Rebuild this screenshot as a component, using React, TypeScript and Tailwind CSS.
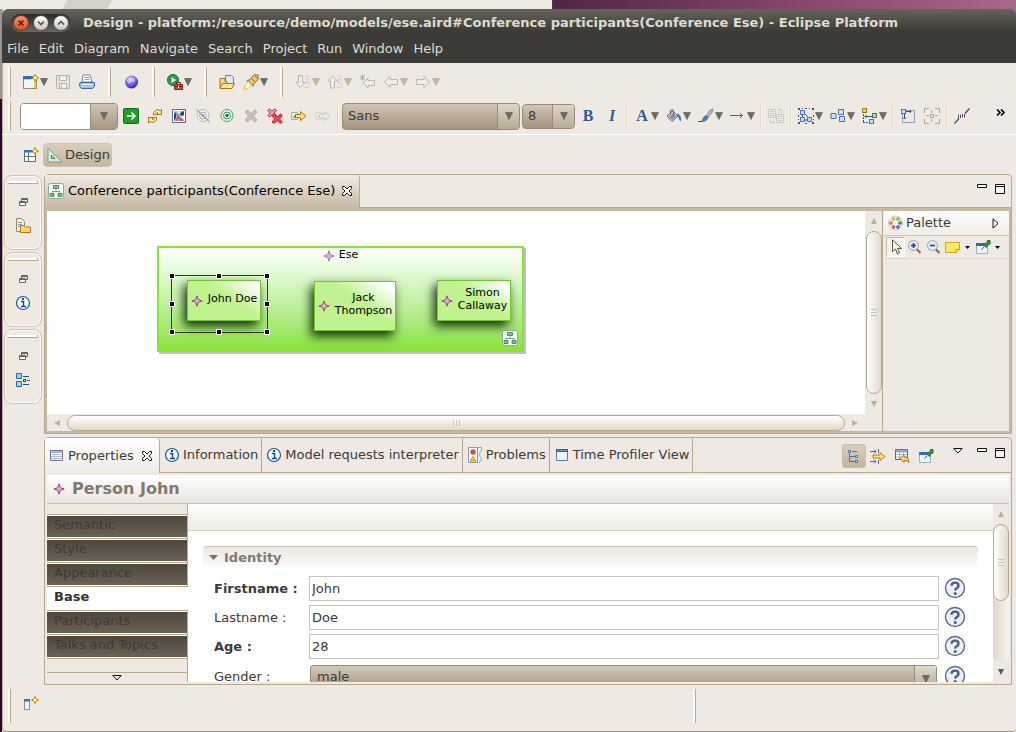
import React from "react";

type Kids = { children?: React.ReactNode };

/* ---------- icon helpers ---------- */

function Icon({ children, size = 16, faded = false }: Kids & { size?: number; faded?: boolean }) {
  return (
    <svg
      aria-hidden="true"
      width={size}
      height={size}
      viewBox="0 0 16 16"
      fill="none"
      className={faded ? "shrink-0 opacity-60" : "shrink-0"}
    >
      {children}
    </svg>
  );
}

function Spark({ x = 9, y = 0 }: { x?: number; y?: number }) {
  return (
    <path
      d={`M${x + 3.5} ${y}l1.2 2.3 2.3 1.2-2.3 1.2-1.2 2.3-1.2-2.3-2.3-1.2 2.3-1.2z`}
      fill="#fff3b0"
      stroke="#b8860b"
    />
  );
}

function Caret({ faded = false }: { faded?: boolean }) {
  return (
    <svg aria-hidden="true" width="8" height="8" viewBox="0 0 8 8" className="shrink-0">
      <path d="M0.5 0.5h7L4 7.5z" fill={faded ? "#c4b69c" : "#6e6b64"} stroke={faded ? "#b5a78b" : "#5a5852"} strokeWidth="0.6" />
    </svg>
  );
}

const NewWizardIcon = () => (
  <Icon>
    <rect x="0.5" y="2.5" width="13" height="12" fill="#eef7fc" stroke="#9a8a58" />
    <path d="M0 2h11v3H0z" fill="#2f6cb0" />
    <path d="M1 5h7v1H1z" fill="#a9cdec" />
    <path d="M11.5 14C12.500 11 12.500 9 12 6" stroke="#f0c850" strokeWidth="2" />
    <Spark x={8.7} y={0.3} />
  </Icon>
);
const SaveIcon = () => (
  <Icon>
    <path d="M1.5 1.5h13v13h-12l-1-1z" fill="#e6e3dd" stroke="#b6b3ad" />
    <path d="M4.5 1.5h7v5h-7zM4.5 9.5h7v5h-7z" fill="#f1efea" stroke="#b6b3ad" />
    <path d="M6.5 11v3" stroke="#b6b3ad" />
  </Icon>
);
const PrintIcon = () => (
  <Icon>
    <path d="M4 1h7l2 7H3z" fill="#fff" stroke="#6b87b5" />
    <path d="M5.5 3.5h5M5.5 5.5h5" stroke="#7d9bd0" />
    <path d="M1 8.5h14.5v4l-2 2H2.5l-2-2z" fill="#a9c3e6" stroke="#44699e" />
    <path d="M3 10.5h10" stroke="#e9f1fb" />
  </Icon>
);
const BallIcon = () => (
  <Icon>
    <defs>
      <radialGradient id="ball" cx="0.4" cy="0.3" r="0.75">
        <stop offset="0" stopColor="#e6e2ff" />
        <stop offset="0.45" stopColor="#8479f5" />
        <stop offset="1" stopColor="#2a10b8" />
      </radialGradient>
    </defs>
    <circle cx="8.5" cy="8" r="6.5" fill="url(#ball)" />
    <path d="M4 7q3-3 8-2M5 9q3-3 7-2" stroke="#e7e4ff" strokeWidth="0.8" />
  </Icon>
);
const RunIcon = () => (
  <Icon>
    <circle cx="6" cy="6" r="5.5" fill="#2c9a4c" stroke="#15703a" />
    <path d="M4.5 3v6l4.5-3z" fill="#fff" />
    <path d="M7.5 10.5h8v5h-8z" fill="#d8483c" stroke="#9c1f1c" />
    <path d="M9.5 10V8.500h4V10M8 12.500h7" stroke="#7d1414" />
    <path d="M11 12h1v2h-1z" fill="#fff" />
  </Icon>
);
const OpenIcon = () => (
  <Icon>
    <path d="M6.500 1.500h6l2 2v7h-8z" fill="#dfe9f6" stroke="#6b82a8" />
    <path d="M1 4.500h5v3h2V14H1z" fill="#f6d68a" stroke="#a8731b" />
    <path d="M3.500 9.500h12l-2.500 5H1z" fill="#fbe3a4" stroke="#a8731b" />
  </Icon>
);
const RocketIcon = () => (
  <Icon>
    <path d="M11 .8l4.200 .2-.3 4.500-5.300 5.500-4-4z" fill="#f6c47a" stroke="#9d6a22" />
    <path d="M8.500 4.500l3.500 3.500M12 2l2.500 2.500" stroke="#7a5b9b" />
    <path d="M5 7.500l3.500 3.500Q6 15 1 15.500 .5 12 5 7.500z" fill="#fffbd0" stroke="#d9b437" strokeWidth="0.800" />
    <path d="M6 5L3 6.500 5 8zM9 11l1 2.500 1.500-4z" fill="#6d86ad" />
  </Icon>
);
const AnnoIcon = ({ up = false }: { up?: boolean }) => (
  <Icon>
    <path
      d={up ? "M5.500 2l5 5H7.500v7h-4V7H.8z" : "M3.500 1.500h4v7h2.700l-4.700 5-4.700-5h2.700z"}
      fill="#f0ede6"
      stroke="#b9b6ae"
    />
    <path d="M10 1.500h3M11 3.500h2M11 5.500h2M11 7.500h2M11 9.500h2M10 13.500h3" stroke="#cfccc4" />
    <path d="M14.500 1v14" stroke="#dedbd4" />
  </Icon>
);
const ArrowIcon = ({ right = false, star = false }: { right?: boolean; star?: boolean }) => (
  <Icon>
    <path
      d={right ? "M14.500 8L9 2.500v3H1.500v5H9v3z" : star ? "M4 9l5-5v2.500h6.500v5H9V14z" : "M1.500 8L7 2.500v3h7.500v5H7v3z"}
      fill="#f0ede6"
      stroke="#bbb8b0"
    />
    {star && <path d="M3.500 .5v6M.8 1.500l5.400 4M6.200 1.500l-5.400 4" stroke="#aaa79f" />}
  </Icon>
);

const GoIcon = () => (
  <Icon>
    <rect x="0.5" y="0.500" width="15" height="15" rx="1" fill="#279a2c" stroke="#11691a" />
    <path d="M4 8h8M8.500 4.500L12 8l-3.500 3.500" stroke="#fff" strokeWidth="1.500" />
  </Icon>
);
const SyncIcon = () => (
  <Icon>
    <path d="M8.500 2.500Q11 .5 13 2.500L14.500 1.500v5h-5L11 5Q9.500 4 8.800 5.800 8 7.500 6.500 7 6 4 8.500 2.500z" fill="#ffe59a" stroke="#a8741a" />
    <path d="M8 13.500Q5.500 15.500 3.500 13.500L1.500 15v-5.500h5L5 11Q6.500 12 7.200 10.200 8 8.500 9.500 9 10 12 8 13.500z" fill="#ffe59a" stroke="#a8741a" />
  </Icon>
);
const ImageIcon = () => (
  <Icon>
    <rect x="1.500" y="1.500" width="13" height="13" fill="#fff" stroke="#5c6f87" />
    <path d="M3 3h10v10H3z" fill="#9cc0e6" />
    <path d="M3 6l2-2v6l-2 3zM9 5l4-2v4l-3 1z" fill="#23477c" />
    <path d="M5.500 5l2.500 2v1.500l3 2 1.500 2.500H9l-1.500-2L6 13H4.500l1.500-4z" fill="#d35f4d" />
    <path d="M6 3h3v3H8zM9.500 8H13v3l-2-1z" fill="#f4f2ee" />
  </Icon>
);
const TargetIcon = ({ off = false }: { off?: boolean }) => (
  <Icon>
    <circle cx="8" cy="7.500" r="6" fill="#f5f7f2" stroke={off ? "#b4b7ba" : "#43a061"} />
    <circle cx="8" cy="7.500" r="3.500" stroke={off ? "#9da2a6" : "#348a50"} />
    <circle cx="8" cy="7.500" r="1.800" fill={off ? "#b4b7ba" : "#1e7a40"} />
    {off && <path d="M1.500 1.500l13 12.500" stroke="#6f7c8c" />}
  </Icon>
);
const CrossIcon = () => (
  <Icon>
    <path d="M2 4l2-2 4 3.500L12 2l2 2-3.500 4L14 12l-2 2-4-3.500L4 14l-2-2 3.500-4z" fill="#c7c1ba" stroke="#b5aea6" />
  </Icon>
);
const DoubleCrossIcon = () => (
  <Icon>
    <path d="M.8 2.500l1.500-1.700L5 3.200 8 .8l1.500 1.700L7 5l2.500 2.700L8 9.200 5 7 2.500 9 1 7.500 3.200 5z" fill="#f4a0a6" stroke="#c4283a" />
    <path d="M5 7.500L6.700 6l3.500 2.800L13.700 6l1.600 1.500L12.500 11l2.800 2.700-1.600 1.700-3.500-2.700-3.500 2.700L5 13.700 7.800 11z" fill="#f0485a" stroke="#c01c34" />
  </Icon>
);
const TransferIcon = ({ off = false }: { off?: boolean }) => (
  <Icon>
    <path d="M.5 4.500h6v7h-6z" fill={off ? "#efece6" : "#e4f1e0"} stroke={off ? "#d9d6cf" : "#9cb89f"} />
    <path d="M2 10l1.500-3L5 10z" fill={off ? "#d3d0c8" : "#3f9a57"} />
    <path d="M4.500 6.500h5V3.500l5.500 4.700-5.500 4.500V9.800h-5z" fill={off ? "#efece6" : "#ffe18b"} stroke={off ? "#c9c6be" : "#a8741a"} />
  </Icon>
);
const FontColorIcon = () => <span className="w-4 text-center font-['Liberation_Serif',serif] text-base font-bold text-[#2f5a96]">A</span>;
const BucketIcon = () => (
  <Icon>
    <path d="M6.500 3L1 8l5 5.500L12 8z" fill="#c9ced9" stroke="#6b7080" />
    <path d="M7 5.500l3.500 3L6.500 12 3 9z" fill="#8d93a3" />
    <path d="M4.500 6.500V2.500q1.500-2 3 0V8" stroke="#5b5f6c" />
    <path d="M10.500 5.500q4.500 .5 4.500 5.500v2.500q-2-1-2.500-4z" fill="#3c74b5" />
  </Icon>
);
const BrushIcon = () => (
  <Icon>
    <path d="M15 1L12 2 8.500 7.500l2 1.800 3.500-4.800z" fill="#b8bcc8" stroke="#6a6e7a" strokeWidth="0.700" />
    <path d="M10 9.500Q9 13.500 3 13.500 5 13 5.500 9.500 7 7 8.500 8z" fill="#4d7fbd" stroke="#2c5a96" strokeWidth="0.700" />
    <path d="M0 13.500h4" stroke="#2c5a96" />
  </Icon>
);
const LineStyleIcon = () => (
  <Icon>
    <path d="M0 7.500h12.500M10 5l2.500 2.500L10 10" stroke="#3b62a0" />
  </Icon>
);
const CopyAppearanceIcon = () => (
  <Icon faded>
    <path d="M.5 1.500h7v8h-7zM8.500 6.500h7v8h-7z" fill="#efece6" stroke="#b9b6ae" />
    <path d="M2 3.500h4M2 5.500h4M2 7.500h4M10 8.500h4M10 10.500h4M10 12.500h4M9.500 1.500h4V5M12 3.500L13.500 5 15 3.500M2.500 11v3.500h4M5 13l1.500 1.500L5 16" stroke="#b9b6ae" />
  </Icon>
);
const SelectAllIcon = () => (
  <Icon>
    <path d="M0 0h2v2H0zM14 0h2v2h-2zM0 14h2v2H0zM14 14h2v2h-2zM7 0h2v1H7zM0 7h1v2H0zM15 7h1v2h-1zM7 15h2v1H7zM4 0h1v1H4zM11 0h1v1h-1zM0 11h1v1H0zM15 11h1v1h-1z" fill="#2f5690" />
    <path d="M6 5l6 6M4.500 5v7h7" stroke="#2f5690" />
    <path d="M2.500 2.500h4v4h-4zM2.500 9.500h4v4h-4zM9.500 9.500h4v4h-4z" fill="#c6dcf3" stroke="#4773b0" />
  </Icon>
);
const AlignIcon = () => (
  <Icon>
    <path d="M1 5.500h5v5H1zM8.500 1.500h5v5h-5zM9.500 8.500h5v5h-5z" fill="#cfe1f5" stroke="#4773b0" />
  </Icon>
);
const ArrangeIcon = () => (
  <Icon>
    <path d="M1.500 6v8M1 14.500h5" stroke="#2f5690" strokeDasharray="2 1" />
    <path d="M3 8.500h7M4.500 7l-1.500 1.500L4.500 10" stroke="#2f5690" />
    <rect x="0.500" y="0.500" width="4" height="4" fill="#f6d264" stroke="#98781c" />
    <rect x="10.500" y="5.500" width="4" height="4" fill="#a6dc8a" stroke="#47853a" />
    <rect x="7.500" y="11.500" width="4" height="4" fill="#c6dcf3" stroke="#4773b0" />
  </Icon>
);
const AutoSizeIcon = () => (
  <Icon>
    <path d="M2.500 2.500h12v12h-12z" stroke="#2f5690" strokeDasharray="1 1" />
    <path d="M5 3.500h6M9.500 2L11 3.500 9.500 5M4.500 5v6M3 9.500L4.500 11 6 9.500" stroke="#2f5690" />
    <rect x="1.500" y="1.500" width="4" height="4" fill="#d5e5f6" stroke="#4773b0" />
  </Icon>
);
const SnapIcon = () => (
  <Icon>
    <path d="M.5 5V.5H5M11 .5h4.500V5M.5 11v4.500H5M11 15.500h4.500V11M6.500 6.500h3v3h-3zM7.500 2v3M7.500 11v3M2 7.500h3M11 7.500h3" stroke="#a7a49d" />
  </Icon>
);
const RouteIcon = () => (
  <Icon>
    <path d="M15.500 .5L11 5.500M5 10.500L.5 15.500" stroke="#2f5690" strokeWidth="1.300" />
    <path d="M4.500 6.500v3.500M6.500 6.500v3.500M8.500 6v3.500M10.500 6v3.500" stroke="#5f4b52" />
  </Icon>
);
const PerspectiveIcon = () => (
  <Icon>
    <path d="M1.500 3.500h11v11h-11z" fill="#fff" stroke="#5a6d84" />
    <path d="M1 3h11v2.500H1z" fill="#3470b4" />
    <path d="M5.500 5v9M2 9.500h10" stroke="#5a6d84" />
    <Spark x={8.500} y={0.500} />
  </Icon>
);
const DesignIcon = () => (
  <Icon>
    <path d="M1 1v14h14z" fill="#d8ecdb" stroke="#7d9b83" />
    <path d="M4.500 8v3.500H8z" fill="#eee8dc" stroke="#4e7156" />
  </Icon>
);
const RestoreIcon = () => (
  <svg aria-hidden="true" width="9" height="9" viewBox="0 0 9 9" fill="none">
    <path d="M2.500 3V.5h6v4H7M2 1.500h7" stroke="#6a635a" />
    <path d="M.5 3.500h6v4h-6zM0 4.500h7" fill="#fff" stroke="#6a635a" />
  </svg>
);
const ProjectIcon = () => (
  <Icon>
    <path d="M1.500 .5h5l3 3v10h-8z" fill="#eef3fa" stroke="#a48a4a" />
    <path d="M3 4.500h4M3 6.500h4M3 8.500h3" stroke="#7a95c4" />
    <path d="M5.500 14.500v-7h4l1 1.500h5v5.500z" fill="#ffd772" stroke="#b37a18" />
  </Icon>
);
const InfoIcon = () => (
  <Icon>
    <circle cx="8" cy="8" r="6.500" fill="#f3f9ff" stroke="#175a9c" strokeWidth="1.200" />
    <path d="M6 6.500h2.500v5M6 11.500h5" stroke="#0f4a8c" strokeWidth="1.400" />
    <path d="M7 3h2v2H7z" fill="#0f4a8c" />
  </Icon>
);
const OutlineIcon = () => (
  <Icon>
    <path d="M1.500 1.500h5v5h-5zM1.500 9.500h5v5h-5z" fill="#9fd0f0" stroke="#1f6aa8" />
    <path d="M8 4.500h6M8 12.500h6M12 8.500h3" stroke="#1c4f80" />
    <rect x="8.500" y="7.500" width="2" height="2" stroke="#1c4f80" />
  </Icon>
);
const DiagramIcon = () => (
  <Icon>
    <rect x="0.500" y="0.500" width="15" height="15" rx="2" fill="#fff" stroke="#7fb391" />
    <path d="M5.500 2.500h5v3h-5zM2 10.500h4v3H2zM10 10.500h4v3h-4z" fill="#7fb98e" stroke="#4d8d60" />
    <path d="M8 5.500v3M4 10.500v-2h8v2" stroke="#6ba57c" />
  </Icon>
);
const CloseIcon = () => (
  <svg aria-hidden="true" width="12" height="12" viewBox="0 0 12 12">
    <path
      d="M1.500 1.500h2L6 4l2.500-2.500h2v2L8 6l2.500 2.500v2h-2L6 8l-2.500 2.500h-2v-2L4 6 1.500 3.500z"
      fill="#fff"
      stroke="#111"
    />
  </svg>
);
const StarIcon = ({ tone = "#a8407f" }: { tone?: string }) => (
  <svg aria-hidden="true" width="12" height="12" viewBox="0 0 12 12" className="shrink-0">
    <path d="M6 .8l1.300 3.900L11.200 6 7.300 7.300 6 11.200 4.700 7.300.8 6l3.900-1.300z" fill="#cdc3cf" stroke={tone} />
  </svg>
);
const TableIcon = () => (
  <Icon>
    <path d="M1.500 2.500h12v10h-12z" fill="#fff" stroke="#6b7a92" />
    <path d="M2 3h11v2H2z" fill="#a9b7cc" />
    <path d="M2 6.500h11M2 8.500h11M2 10.500h11M5.500 5v7" stroke="#b4bfd0" />
  </Icon>
);
const ProblemsIcon = () => (
  <Icon>
    <path d="M1.500 .5h9v15h-9z" fill="#fff" stroke="#8d98ab" />
    <path d="M11 .5h3.500v3q-2 2-2 4t2 4q0 3-3 4" fill="#e9f2fb" stroke="#88a8d0" />
    <circle cx="6" cy="5" r="2.800" fill="#dc4c50" />
    <path d="M6 9.500l3 4.500H3z" fill="#ffcf4a" stroke="#c98a12" />
  </Icon>
);
const ViewIcon = () => (
  <Icon>
    <path d="M2.500 2.500h11v11h-11z" fill="#eaf6fd" stroke="#5f7ba0" />
    <path d="M2 2h12v3H2z" fill="#2a64b0" />
    <path d="M3 3.500h10" stroke="#7fb0e2" strokeWidth="0.600" />
  </Icon>
);
const TreeIcon = () => (
  <Icon>
    <path d="M3.500 4v9.500h6M3.500 8.500h6M6 3.500h5" stroke="#4a74b4" />
    <path d="M2.500 2.500h2v2h-2zM9.500 7.500h2v2h-2zM9.500 12.500h2v2h-2z" fill="#d9e6f7" stroke="#4a74b4" />
  </Icon>
);
const FilterIcon = () => (
  <Icon>
    <path d="M0 3.500h6M4 1.500l2 2-2 2M0 13.500h6M4 11.500l2 2-2 2M8.500 1v4M8.500 12v4" stroke="#5a6b80" />
    <path d="M3 7h7V4.500L15 8.500l-5 4V10H3z" fill="#ffe08a" stroke="#b07f1e" />
  </Icon>
);
const TableRestoreIcon = () => (
  <Icon>
    <path d="M1.500 1.500h12v10h-12z" fill="#fff" stroke="#5c6780" />
    <path d="M2 2h11v2H2zM2 6.500h11M2 9h11M5.500 4v7M9.500 4v7" fill="#9db0cf" stroke="#8898b5" strokeWidth="0.700" />
    <path d="M6 10.500l4-3.500v2q5 0 5 5.500-2-2.500-5-2v2z" fill="#ffd873" stroke="#a8741a" />
  </Icon>
);
const PinIcon = () => (
  <Icon>
    <path d="M1.500 4.500h11v10h-11z" fill="#eaf5fc" stroke="#9db0c4" />
    <path d="M1 4h8v3H1z" fill="#2c6fb8" />
    <path d="M6.500 10.500L9.500 7.500" stroke="#444" />
    <path d="M8.500 5l3 3.500 1-2.500 2.500-1V1.500h-2.500L12 4z" fill="#3a9a3e" stroke="#1e6a26" />
  </Icon>
);
const PaletteIcon = () => (
  <Icon>
    <circle cx="7.500" cy="8" r="7" fill="#f2f7fd" stroke="#b9cbe2" />
    <circle cx="5.500" cy="4" r="1.500" fill="#f3c52a" stroke="#c89a18" strokeWidth="0.600" />
    <circle cx="10" cy="4" r="1.500" fill="#b5c23a" stroke="#7d9a1c" strokeWidth="0.600" />
    <circle cx="3" cy="8" r="1.500" fill="#f09a2a" stroke="#c46e10" strokeWidth="0.600" />
    <circle cx="12" cy="8" r="1.500" fill="#41a04a" stroke="#22702c" strokeWidth="0.600" />
    <circle cx="5.500" cy="12" r="1.500" fill="#f06868" stroke="#c02020" strokeWidth="0.600" />
    <circle cx="10" cy="12" r="1.500" fill="#5a86e0" stroke="#2848b0" strokeWidth="0.600" />
  </Icon>
);
const CursorIcon = () => (
  <Icon>
    <path d="M4.500 .8v12l3-2.800 2 5 2-1-2-4.500h4z" fill="#fdf9e6" stroke="#5d5647" />
  </Icon>
);
const MagnifyIcon = ({ minus = false }: { minus?: boolean }) => (
  <Icon>
    <path d="M9.500 10l4 4" stroke="#8a6b4b" strokeWidth="2.200" />
    <circle cx="6.500" cy="6.500" r="5" fill="#e3ebf7" stroke="#9aa4b5" />
    <path d={minus ? "M4 6.500h5" : "M4 6.500h5M6.500 4v5"} stroke="#1f3fa0" strokeWidth="1.600" />
  </Icon>
);
const NoteIcon = () => (
  <Icon>
    <path d="M.5 3.500h14v7l-3.500 3H.5z" fill="#ffe95a" stroke="#c4a53a" />
    <path d="M11 13.500v-3h3.500" fill="#fff3a8" stroke="#b6922a" />
  </Icon>
);
const FastViewIcon = () => (
  <Icon>
    <path d="M1.500 3.500h5v10h-5z" fill="#eef7fc" stroke="#7f8fa0" />
    <path d="M1 3h6v2.500H1z" fill="#3470b4" />
    <Spark x={8.500} y={0.500} />
  </Icon>
);
const HelpIcon = () => (
  <svg aria-hidden="true" width="22" height="22" viewBox="0 0 22 22">
    <circle cx="11" cy="11" r="9.500" fill="#eceef2" stroke="#5b6b88" strokeWidth="1.400" />
    <path d="M7.500 8.800Q7.700 5.600 11 5.600q3.500 0 3.500 2.900 0 1.700-1.700 2.600Q11.200 12 11.200 13.400" fill="none" stroke="#4c5f86" strokeWidth="2.400" />
    <circle cx="11.200" cy="16.500" r="1.500" fill="#4c5f86" />
  </svg>
);
const MinIcon = () => (
  <svg aria-hidden="true" width="10" height="4" viewBox="0 0 10 4">
    <path d="M.5 .5h9v3h-9z" fill="#fff" stroke="#111" />
  </svg>
);
const MaxIcon = () => (
  <svg aria-hidden="true" width="10" height="10" viewBox="0 0 10 10">
    <path d="M.5 .5h9v9h-9zM0 2.500h10" fill="#fff" stroke="#111" />
  </svg>
);
const MenuTriangle = () => (
  <svg aria-hidden="true" width="10" height="6" viewBox="0 0 10 6">
    <path d="M.8 .5h8.400L5 5z" fill="#fff" stroke="#111" />
  </svg>
);
const MiniCaret = () => (
  <svg aria-hidden="true" width="5" height="3" viewBox="0 0 5 3">
    <path d="M0 0h5L2.500 3z" fill="#000" />
  </svg>
);

/* ---------- tool bar pieces ---------- */

function Handle() {
  return <div className="w-[3px] shrink-0 self-stretch border-r border-[#b8a88c] bg-white/70" />;
}
function Group({ children }: Kids) {
  return (
    <div className="flex shrink-0 self-stretch">
      <Handle />
      <div className="ml-2 mr-[9px] flex items-center">{children}</div>
    </div>
  );
}
function Tool({ label, children, drop, faded }: Kids & { label: string; drop?: boolean; faded?: boolean }) {
  return (
    <button aria-label={label} className={drop ? "flex h-6 w-8 shrink-0 items-center gap-px pl-1" : "flex h-6 w-6 shrink-0 items-center justify-center"}>
      {children}
      {drop && <Caret faded={faded} />}
    </button>
  );
}
function Sep() {
  return <div className="mx-0.5 h-6 w-0.5 shrink-0 border-l border-[#e3d9c6] bg-[#f8f5ee]" />;
}
function Combo({ label, value, box, arrow }: { label: string; value: string; box: string; arrow: string }) {
  return (
    <div className={box}>
      <select aria-label={label} defaultValue={value} className="h-full w-full appearance-none bg-transparent pl-[5px] text-[#3c3b37] outline-none">
        <option>{value}</option>
      </select>
      <span className={arrow}>
        <Caret />
      </span>
    </div>
  );
}

function ScrollArrow({ dir, dark = false }: { dir: "up" | "down" | "left" | "right"; dark?: boolean }) {
  const d = {
    up: "M0 6h6L3 0z",
    down: "M0 0h6L3 6z",
    left: "M6 0v6L0 3z",
    right: "M0 0v6l6-3z",
  }[dir];
  return (
    <svg aria-hidden="true" width="6" height="6" viewBox="0 0 6 6" className="shrink-0">
      <path d={d} fill={dark ? "#5d5a53" : "#bcb09b"} />
    </svg>
  );
}

/* ---------- diagram ---------- */

function Handles() {
  const dot = "absolute size-1 bg-black outline outline-white";
  return (
    <>
      <span className={`${dot} -left-0.5 -top-0.5`} />
      <span className={`${dot} left-[45px] -top-0.5`} />
      <span className={`${dot} -right-0.5 -top-0.5`} />
      <span className={`${dot} -left-0.5 top-[26px]`} />
      <span className={`${dot} -right-0.5 top-[26px]`} />
      <span className={`${dot} -bottom-0.5 -left-0.5`} />
      <span className={`${dot} -bottom-0.5 left-[45px]`} />
      <span className={`${dot} -bottom-0.5 -right-0.5`} />
    </>
  );
}

const personBox =
  "absolute flex items-center gap-0.5 border border-[#73c82c] bg-[linear-gradient(215deg,#ffffff_8%,#c1f290_42%)] pl-[3px] text-[11px] leading-[13px] text-black shadow-[-3px_5px_10px_0_rgba(10,30,0,0.95)]";

function Diagram() {
  return (
    <div className="relative min-w-0 overflow-hidden bg-white">
      <div className="absolute left-[110px] top-[35px] h-[106px] w-[367px] border-2 border-[#8ae234] bg-gradient-to-b from-white to-[#8ae234] shadow-[2px_2px_0_#c3c0ca]">
        <div className="flex items-start justify-center gap-1 text-[11px] leading-[13px] text-black">
          <span className="pt-0.5"><StarIcon tone="#b46cc0" /></span>
          <span>Ese</span>
        </div>
      </div>
      <div className={`${personBox} left-[140px] top-[69px] h-[41px] w-[74px]`}>
        <StarIcon />
        <span className="grow pb-1 text-center">John Doe</span>
      </div>
      <div className={`${personBox} left-[267px] top-[70px] h-[50px] w-[82px]`}>
        <StarIcon />
        <span className="grow pb-1 text-center">Jack<br />Thompson</span>
      </div>
      <div className={`${personBox} left-[390px] top-[69px] h-[41px] w-[74px]`}>
        <StarIcon />
        <span className="grow pb-1 text-center">Simon<br />Callaway</span>
      </div>
      <div className="absolute left-[124px] top-[64px] h-[58px] w-[97px] border border-[#2c3a20]">
        <Handles />
      </div>
      <div className="absolute left-[455px] top-[119px]">
        <DiagramIcon />
      </div>
    </div>
  );
}

/* ---------- panels ---------- */

function TrimBox({ children }: Kids) {
  return (
    <div className="flex h-[75px] w-[38px] flex-col items-center rounded-lg border border-[#cfc4b0] shadow-[inset_0_0_0_1px_#fbfaf7]">
      <div className="mt-[5px] h-[3px] w-[30px] border-b border-r border-[#b8a88c] bg-white" />
      <div className="mt-[14px]">
        <RestoreIcon />
      </div>
      <div className="mt-[11px]">{children}</div>
    </div>
  );
}

function Editor() {
  return (
    <section className="flex min-h-0 flex-1 flex-col rounded-t-[4px] border border-[#b8a88c]">
      <div className="flex h-[33px] shrink-0">
        <div className="flex w-[315px] items-center rounded-tr-[4px] border-r border-[#b8a88c] bg-gradient-to-b from-[#f0ece5] to-[#c6b8a3] pb-px pl-[3px] text-black">
          <DiagramIcon />
          <span className="ml-1 whitespace-nowrap">Conference participants(Conference Ese)</span>
          <button aria-label="Close editor" className="ml-1.5">
            <CloseIcon />
          </button>
        </div>
        <div className="flex flex-1 items-start justify-end gap-2 border-b border-[#b8a88c] pr-[6px] pt-[9px]">
          <button aria-label="Minimize editor" className="flex"><MinIcon /></button>
          <button aria-label="Maximize editor" className="flex"><MaxIcon /></button>
        </div>
      </div>
      <div className="flex min-h-0 flex-1 border-2 border-t-[3px] border-[#c6b8a3]">
        <div className="grid min-w-0 flex-1 grid-cols-[minmax(0,1fr)_17px] grid-rows-[minmax(0,1fr)_17px]">
          <Diagram />
          <div className="flex flex-col items-center">
            <div className="flex h-5 items-center"><ScrollArrow dir="up" /></div>
            <div className="flex w-4 flex-1 items-center justify-center rounded-full border border-[#b8a88c] bg-gradient-to-r from-white to-[#e2dacb]">
              <span className="h-[7px] w-1.5 border-y border-[#cfc4b0] bg-[linear-gradient(#cfc4b0,#cfc4b0)] bg-[length:100%_1px] bg-center bg-no-repeat" />
            </div>
            <div className="flex h-5 items-center"><ScrollArrow dir="down" /></div>
          </div>
          <div className="flex items-center">
            <div className="flex w-5 justify-center"><ScrollArrow dir="left" /></div>
            <div className="flex h-4 flex-1 items-center justify-center rounded-full border border-[#b8a88c] bg-gradient-to-b from-white to-[#e2dacb]">
              <span className="h-1.5 w-[7px] border-x border-[#cfc4b0] bg-[linear-gradient(#cfc4b0,#cfc4b0)] bg-[length:1px_100%] bg-center bg-no-repeat" />
            </div>
            <div className="flex w-5 justify-center"><ScrollArrow dir="right" /></div>
          </div>
          <div />
        </div>
        <aside className="w-[127px] shrink-0 border-l border-[#b8a88c] pl-px">
          <div className="flex h-[25px] items-center border-b border-[#cfc4b0] bg-gradient-to-b from-white to-[#f0ece6] pl-1 pr-[10px]">
            <PaletteIcon />
            <span className="ml-0.5">Palette</span>
            <svg aria-hidden="true" width="7" height="11" viewBox="0 0 7 11" className="ml-auto">
              <path d="M1 .8v9.400L6 5.500z" fill="#fff" stroke="#111" />
            </svg>
          </div>
          <div className="flex h-[23px] items-center border-b border-[#dcd4c6] pl-0.5">
            <button aria-label="Select" className="flex h-5 w-[19px] items-center justify-center border border-[#c9bba3] border-b-white border-r-white bg-[#f7f5f1]"><CursorIcon /></button>
            <button aria-label="Zoom in" className="ml-0.5"><MagnifyIcon /></button>
            <button aria-label="Zoom out" className="ml-[3px]"><MagnifyIcon minus /></button>
            <button aria-label="Note" className="ml-[3px] flex items-center gap-1"><NoteIcon /><MiniCaret /></button>
            <button aria-label="Pin" className="ml-[5px] flex items-center gap-1"><PinIcon /><MiniCaret /></button>
          </div>
        </aside>
      </div>
    </section>
  );
}

function ViewTab({ icon, children }: Kids & { icon: React.ReactNode }) {
  return (
    <button className="flex shrink-0 items-center gap-[3px] whitespace-nowrap border-b border-r border-[#b8a88c] pl-1 pr-[3px]">
      {icon}
      {children}
    </button>
  );
}

function SideTab({ children }: Kids) {
  return (
    <button className="h-6 w-full border-r border-t border-[#b8a88c] bg-[linear-gradient(#fff_0_1px,#4d483f_1px,#6b6153_22px,#fff_22px)] pb-[3px] pl-[7px] text-left leading-5 text-[#3b3a35]">
      {children}
    </button>
  );
}

function Field({ id, label, value, bold }: { id: string; label: string; value: string; bold?: boolean }) {
  return (
    <div className="flex h-[25px] items-center">
      <label htmlFor={id} className={bold ? "w-[95px] shrink-0 font-bold" : "w-[95px] shrink-0"}>{label}</label>
      <input id={id} defaultValue={value} className="h-[25px] min-w-0 flex-1 border border-[#c4c4c4] bg-white px-0.5 outline-none" />
      <button type="button" aria-label={`Help for ${value}`} className="ml-[5px] flex h-6 shrink-0"><HelpIcon /></button>
    </div>
  );
}

function Properties() {
  return (
    <section className="mt-[3px] flex h-[248px] shrink-0 flex-col rounded-t-[4px] border border-[#b8a88c] pb-0.5">
      <div className="flex h-[35px] shrink-0">
        <div className="flex w-[115px] shrink-0 items-center rounded-tr-[4px] border-r border-[#b8a88c] bg-gradient-to-b from-white to-[#efebe4] pl-1">
          <TableIcon />
          <span className="ml-[3px]">Properties</span>
          <button aria-label="Close properties" className="ml-auto mr-1.5"><CloseIcon /></button>
        </div>
        <ViewTab icon={<InfoIcon />}>Information</ViewTab>
        <ViewTab icon={<InfoIcon />}>Model requests interpreter</ViewTab>
        <ViewTab icon={<ProblemsIcon />}>Problems</ViewTab>
        <ViewTab icon={<ViewIcon />}>Time Profiler View</ViewTab>
        <div className="flex flex-1 items-start justify-end border-b border-[#b8a88c] pr-1.5 pt-[6px]">
          <button aria-label="Show categories" className="flex size-6 items-center justify-center rounded-[3px] border border-[#c9bda9] bg-gradient-to-b from-[#d9cfbe] to-[#c2b49c]"><TreeIcon /></button>
          <button aria-label="Show advanced properties" className="ml-1 mt-1"><FilterIcon /></button>
          <button aria-label="Restore default value" className="ml-2 mt-1"><TableRestoreIcon /></button>
          <button aria-label="Pin view" className="ml-2 mt-1"><PinIcon /></button>
          <button aria-label="View menu" className="ml-[19px] mt-1 flex"><MenuTriangle /></button>
          <button aria-label="Minimize view" className="ml-[14px] mt-1 flex"><MinIcon /></button>
          <button aria-label="Maximize view" className="ml-2 mt-1 flex"><MaxIcon /></button>
        </div>
      </div>
      <div className="mx-0.5 mt-0.5 flex h-[29px] shrink-0 items-center border-b border-[#c9c2b5] bg-gradient-to-b from-white to-[#e9e6e1] pl-1.5">
        <StarIcon />
        <h2 className="ml-[7px] text-[16px] font-bold text-[#84796b]">Person John</h2>
      </div>
      <div className="mx-0.5 flex min-h-0 flex-1">
        <nav className="flex w-[141px] shrink-0 flex-col">
          <div className="h-[10px] border-r border-[#b8a88c]" />
          <SideTab>Semantic</SideTab>
          <SideTab>Style</SideTab>
          <SideTab>Appearance</SideTab>
          <button className="h-6 border-t border-[#b8a88c] bg-white pb-[3px] pl-[7px] text-left font-bold leading-5 text-[#33322e]">Base</button>
          <SideTab>Participants</SideTab>
          <SideTab>Talks and Topics</SideTab>
          <div className="h-[14px] border-r border-t border-[#b8a88c]" />
          <button aria-label="Scroll tabs" className="flex min-h-0 flex-1 items-center justify-center border-r border-t border-[#b8a88c]"><MenuTriangle /></button>
        </nav>
        <div className="min-w-0 flex-1 overflow-hidden bg-white">
          <div className="h-[27px] border-b border-[#d8cfc0] bg-gradient-to-b from-white to-[#edeae4]" />
          <div className="mx-[15px] mt-[15px]">
            <div className="flex h-6 items-center rounded-t-[4px] border-t border-[#cfc4b0] bg-gradient-to-b from-[#ebe8e2] to-white pb-0.5 pl-1.5">
              <svg aria-hidden="true" width="9" height="5" viewBox="0 0 9 5"><path d="M0 0h9L4.500 5z" fill="#7b7260" /></svg>
              <h3 className="ml-1.5 font-bold text-[#84796b]">Identity</h3>
            </div>
            <form className="ml-[11px] mr-[12px] mt-1.5 flex flex-col gap-1">
              <Field id="first" label="Firstname :" value="John" bold />
              <Field id="last" label="Lastname :" value="Doe" />
              <Field id="age" label="Age :" value="28" bold />
              <div className="mt-0.5 flex h-[27px] items-start">
                <label htmlFor="gender" className="w-[96px] shrink-0 pt-0.5">Gender :</label>
                <div className="relative h-[27px] min-w-0 flex-1 rounded-[3px] border border-[#9a8b77] bg-gradient-to-b from-[#d2c8b9] to-[#a5937d]">
                  <select id="gender" defaultValue="male" className="h-[22px] w-full appearance-none bg-transparent pl-[6px] outline-none">
                    <option>male</option>
                  </select>
                  <span className="pointer-events-none absolute inset-y-0 right-0 flex w-[22px] items-center justify-center border-l border-[#9a8b77] bg-gradient-to-b from-[#e0d9ce] to-[#b5a691]"><Caret /></span>
                </div>
                <button type="button" aria-label="Help for gender" className="ml-[7px] flex shrink-0"><HelpIcon /></button>
              </div>
            </form>
          </div>
        </div>
        <div className="flex w-4 shrink-0 flex-col items-center">
          <div className="flex h-5 items-center"><ScrollArrow dir="up" /></div>
          <div className="w-4 flex-1 rounded-full bg-gradient-to-r from-[#dfd6c6] to-[#f8f6f2]">
            <div className="flex h-[77px] items-center justify-center rounded-full border border-[#b8a88c] bg-gradient-to-r from-white to-[#e2dacb]">
              <span className="h-[7px] w-1.5 border-y border-[#cfc4b0] bg-[linear-gradient(#cfc4b0,#cfc4b0)] bg-[length:100%_1px] bg-center bg-no-repeat" />
            </div>
          </div>
          <div className="flex h-5 items-center"><ScrollArrow dir="down" dark /></div>
        </div>
      </div>
    </section>
  );
}

const menus = ["File", "Edit", "Diagram", "Navigate", "Search", "Project", "Run", "Window", "Help"];

export default function App() {
  return (
    <div className="flex h-screen min-h-[600px] flex-col overflow-hidden bg-[#eeeae3] font-['DejaVu_Sans',sans-serif] text-[13px] text-[#3c3b37]">
      <div className="-mb-2 flex h-[17px] shrink-0">
        <div className="w-[54.3%] bg-[linear-gradient(120deg,#efebe5_12%,#d5d0cb_12%_20%,#efebe5_20%)]" />
        <div className="flex-1 border-l border-[#55304b] bg-gradient-to-r from-[#4d2745] via-[#83456b] to-[#a8688a]" />
      </div>
      <div className="flex min-h-0 flex-1">
        <div className="w-0.5 shrink-0 bg-[linear-gradient(#9a958e_0_90px,#2a0a28_90px)]" />
        <div className="relative flex min-w-0 flex-1 flex-col rounded-b-[4px] border-b border-b-[#9b9484] shadow-[inset_1px_0_0_#b8ad9a]">
          <header className="shrink-0 rounded-t-[6px] bg-[linear-gradient(#66645a_0,#3c3b37_22px)]">
            <div className="flex h-7 items-center pl-[9px]">
              <div className="flex h-[18px] items-center gap-1 rounded-full bg-gradient-to-b from-[#2a2926] to-[#6a6961] px-0.5">
                <button aria-label="Close" className="flex size-4 items-center justify-center rounded-full border border-[#7a3520] bg-gradient-to-b from-[#f59572] to-[#df4a1c]">
                  <svg aria-hidden="true" width="8" height="8" viewBox="0 0 8 8"><path d="M1.500 1.500l5 5M6.500 1.500l-5 5" stroke="#5a2412" strokeWidth="1.600" /></svg>
                </button>
                <button aria-label="Minimize" className="flex size-4 items-center justify-center rounded-full border border-[#55534c] bg-gradient-to-b from-white to-[#c9c5be]">
                  <svg aria-hidden="true" width="8" height="8" viewBox="0 0 8 8"><path d="M1 2.500l3 3 3-3" fill="none" stroke="#55534c" strokeWidth="1.600" /></svg>
                </button>
                <button aria-label="Maximize" className="flex size-4 items-center justify-center rounded-full border border-[#55534c] bg-gradient-to-b from-white to-[#c9c5be]">
                  <svg aria-hidden="true" width="8" height="8" viewBox="0 0 8 8"><path d="M1 5.500l3-3 3 3" fill="none" stroke="#55534c" strokeWidth="1.600" /></svg>
                </button>
              </div>
              <h1 className="ml-3 whitespace-nowrap font-bold text-[#dfdbd2]">
                Design - platform:/resource/demo/models/ese.aird#Conference participants(Conference Ese) - Eclipse Platform
              </h1>
            </div>
            <nav className="flex h-[26px] items-start gap-[10px] pl-[5px] pt-0.5 text-[#dfdbd2]">
              {menus.map((m) => (
                <button key={m}>{m}</button>
              ))}
            </nav>
          </header>

          <div className="flex h-[37px] shrink-0 pb-[3px] pl-1.5 pt-1">
            <Group>
              <Tool label="New" drop><NewWizardIcon /></Tool>
              <Tool label="Save"><SaveIcon /></Tool>
              <Tool label="Print"><PrintIcon /></Tool>
            </Group>
            <Group>
              <Tool label="Web browser"><BallIcon /></Tool>
            </Group>
            <Group>
              <Tool label="External tools" drop><RunIcon /></Tool>
            </Group>
            <Group>
              <Tool label="Open resource"><OpenIcon /></Tool>
              <Tool label="Search" drop><RocketIcon /></Tool>
            </Group>
            <Group>
              <Tool label="Next annotation" drop faded><AnnoIcon /></Tool>
              <Tool label="Previous annotation" drop faded><AnnoIcon up /></Tool>
              <Tool label="Last edit location"><ArrowIcon star /></Tool>
              <Tool label="Back" drop faded><ArrowIcon /></Tool>
              <Tool label="Forward" drop faded><ArrowIcon right /></Tool>
            </Group>
          </div>

          <div className="flex h-[35px] shrink-0 items-center border-b border-white pb-[3px] pl-1.5 pt-px">
            <Handle />
            <div className="ml-[9px] mr-px flex h-[27px] w-[98px] shrink-0 overflow-hidden rounded-[4px] border border-[#9a8b77]">
              <input aria-label="Quick access" className="min-w-0 flex-1 bg-white px-1 outline-none" />
              <button aria-label="Show history" className="flex w-[27px] items-center justify-center border-l border-[#9a8b77] bg-gradient-to-b from-[#cfc5b7] to-[#a89884]"><Caret /></button>
            </div>
            <Tool label="Go"><GoIcon /></Tool>
            <Tool label="Refresh"><SyncIcon /></Tool>
            <Tool label="Export image"><ImageIcon /></Tool>
            <Tool label="Hide element"><TargetIcon off /></Tool>
            <Tool label="Show element"><TargetIcon /></Tool>
            <Tool label="Delete from diagram"><CrossIcon /></Tool>
            <Tool label="Delete from model"><DoubleCrossIcon /></Tool>
            <Tool label="Paste layout"><TransferIcon /></Tool>
            <Tool label="Copy layout"><TransferIcon off /></Tool>
            <Sep />
            <Combo
              label="Font name"
              value="Sans"
              box="relative ml-px h-[27px] w-[178px] shrink-0 rounded-[4px] border border-[#9a8b77] bg-gradient-to-b from-[#cfc5b7] to-[#a5937d]"
              arrow="pointer-events-none absolute inset-y-0 right-0 flex w-[22px] items-center justify-center rounded-r-[3px] border-l border-[#9a8b77] bg-gradient-to-b from-[#ddd5ca] to-[#b8aa97]"
            />
            <Combo
              label="Font size"
              value="8"
              box="relative ml-0.5 mr-px h-[25px] w-[53px] shrink-0 rounded-[4px] border border-[#9a8b77] bg-gradient-to-b from-[#cfc5b7] to-[#a5937d]"
              arrow="pointer-events-none absolute inset-y-0 right-0 flex w-[22px] items-center justify-center rounded-r-[3px] border-l border-[#9a8b77] bg-gradient-to-b from-[#ddd5ca] to-[#b8aa97]"
            />
            <Tool label="Bold"><span className="font-['Liberation_Serif',serif] text-base font-bold text-[#2f5a96]">B</span></Tool>
            <Tool label="Italic"><span className="font-['Liberation_Serif',serif] text-base font-bold italic text-[#2f5a96]">I</span></Tool>
            <Sep />
            <Tool label="Font color" drop><FontColorIcon /></Tool>
            <Tool label="Fill color" drop><BucketIcon /></Tool>
            <Tool label="Line color" drop><BrushIcon /></Tool>
            <Tool label="Line style" drop><LineStyleIcon /></Tool>
            <Sep />
            <Tool label="Copy appearance"><CopyAppearanceIcon /></Tool>
            <Sep />
            <Tool label="Select all" drop><SelectAllIcon /></Tool>
            <Tool label="Align" drop><AlignIcon /></Tool>
            <Tool label="Arrange" drop><ArrangeIcon /></Tool>
            <Sep />
            <Tool label="Auto size"><AutoSizeIcon /></Tool>
            <Tool label="Snap to grid"><SnapIcon /></Tool>
            <Sep />
            <Tool label="Route style"><RouteIcon /></Tool>
            <button aria-label="More tools" className="ml-auto mr-[11px] flex self-start pt-2">
              <svg aria-hidden="true" width="9" height="7" viewBox="0 0 9 7"><path d="M1 .5l3 3-3 3M5 .5l3 3-3 3" fill="none" stroke="#000" strokeWidth="1.600" /></svg>
            </button>
          </div>

          <div className="flex h-[39px] shrink-0 items-center pl-[21px]">
            <button aria-label="Open perspective"><PerspectiveIcon /></button>
            <button className="ml-1 flex h-6 items-center gap-0.5 rounded-[4px] border border-[#cfc3ae] bg-gradient-to-b from-[#d9cfbe] to-[#c4b69e] pl-[3px] pr-px">
              <DesignIcon />
              Design
            </button>
          </div>

          <div className="flex min-h-0 flex-1 pr-1">
            <div className="flex w-[42px] shrink-0 flex-col gap-0.5 pl-0.5 pt-px">
              <TrimBox><ProjectIcon /></TrimBox>
              <TrimBox><InfoIcon /></TrimBox>
              <TrimBox><OutlineIcon /></TrimBox>
            </div>
            <main className="flex min-w-0 flex-1 flex-col">
              <Editor />
              <Properties />
            </main>
          </div>

          <footer className="flex h-[46px] shrink-0 pb-2 pl-1.5 pt-1">
            <Handle />
            <button aria-label="Show view as fast view" className="-mt-1 ml-3"><FastViewIcon /></button>
            <div className="ml-auto mr-[320px] flex"><Handle /></div>
          </footer>
        </div>
      </div>
    </div>
  );
}
